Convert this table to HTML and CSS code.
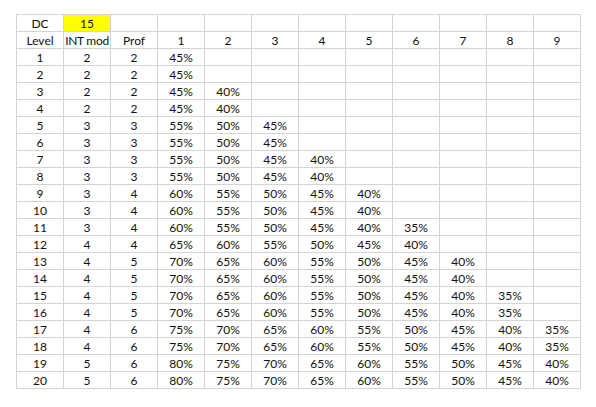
FILE: index.html
```html
<!DOCTYPE html>
<html>
<head>
<meta charset="utf-8">
<link rel="stylesheet" href="styles.css">
</head>
<body>
<div class="sheet">
<div class="c">DC</div><div class="c hl">15</div><div class="c"></div><div class="c"></div><div class="c"></div><div class="c"></div><div class="c"></div><div class="c"></div><div class="c"></div><div class="c"></div><div class="c"></div><div class="c"></div>
<div class="c">Level</div><div class="c tight">INT mod</div><div class="c">Prof</div><div class="c">1</div><div class="c">2</div><div class="c">3</div><div class="c">4</div><div class="c">5</div><div class="c">6</div><div class="c">7</div><div class="c">8</div><div class="c">9</div>
<div class="c">1</div><div class="c">2</div><div class="c">2</div><div class="c">45%</div><div class="c"></div><div class="c"></div><div class="c"></div><div class="c"></div><div class="c"></div><div class="c"></div><div class="c"></div><div class="c"></div>
<div class="c">2</div><div class="c">2</div><div class="c">2</div><div class="c">45%</div><div class="c"></div><div class="c"></div><div class="c"></div><div class="c"></div><div class="c"></div><div class="c"></div><div class="c"></div><div class="c"></div>
<div class="c">3</div><div class="c">2</div><div class="c">2</div><div class="c">45%</div><div class="c">40%</div><div class="c"></div><div class="c"></div><div class="c"></div><div class="c"></div><div class="c"></div><div class="c"></div><div class="c"></div>
<div class="c">4</div><div class="c">2</div><div class="c">2</div><div class="c">45%</div><div class="c">40%</div><div class="c"></div><div class="c"></div><div class="c"></div><div class="c"></div><div class="c"></div><div class="c"></div><div class="c"></div>
<div class="c">5</div><div class="c">3</div><div class="c">3</div><div class="c">55%</div><div class="c">50%</div><div class="c">45%</div><div class="c"></div><div class="c"></div><div class="c"></div><div class="c"></div><div class="c"></div><div class="c"></div>
<div class="c">6</div><div class="c">3</div><div class="c">3</div><div class="c">55%</div><div class="c">50%</div><div class="c">45%</div><div class="c"></div><div class="c"></div><div class="c"></div><div class="c"></div><div class="c"></div><div class="c"></div>
<div class="c">7</div><div class="c">3</div><div class="c">3</div><div class="c">55%</div><div class="c">50%</div><div class="c">45%</div><div class="c">40%</div><div class="c"></div><div class="c"></div><div class="c"></div><div class="c"></div><div class="c"></div>
<div class="c">8</div><div class="c">3</div><div class="c">3</div><div class="c">55%</div><div class="c">50%</div><div class="c">45%</div><div class="c">40%</div><div class="c"></div><div class="c"></div><div class="c"></div><div class="c"></div><div class="c"></div>
<div class="c">9</div><div class="c">3</div><div class="c">4</div><div class="c">60%</div><div class="c">55%</div><div class="c">50%</div><div class="c">45%</div><div class="c">40%</div><div class="c"></div><div class="c"></div><div class="c"></div><div class="c"></div>
<div class="c">10</div><div class="c">3</div><div class="c">4</div><div class="c">60%</div><div class="c">55%</div><div class="c">50%</div><div class="c">45%</div><div class="c">40%</div><div class="c"></div><div class="c"></div><div class="c"></div><div class="c"></div>
<div class="c">11</div><div class="c">3</div><div class="c">4</div><div class="c">60%</div><div class="c">55%</div><div class="c">50%</div><div class="c">45%</div><div class="c">40%</div><div class="c">35%</div><div class="c"></div><div class="c"></div><div class="c"></div>
<div class="c">12</div><div class="c">4</div><div class="c">4</div><div class="c">65%</div><div class="c">60%</div><div class="c">55%</div><div class="c">50%</div><div class="c">45%</div><div class="c">40%</div><div class="c"></div><div class="c"></div><div class="c"></div>
<div class="c">13</div><div class="c">4</div><div class="c">5</div><div class="c">70%</div><div class="c">65%</div><div class="c">60%</div><div class="c">55%</div><div class="c">50%</div><div class="c">45%</div><div class="c">40%</div><div class="c"></div><div class="c"></div>
<div class="c">14</div><div class="c">4</div><div class="c">5</div><div class="c">70%</div><div class="c">65%</div><div class="c">60%</div><div class="c">55%</div><div class="c">50%</div><div class="c">45%</div><div class="c">40%</div><div class="c"></div><div class="c"></div>
<div class="c">15</div><div class="c">4</div><div class="c">5</div><div class="c">70%</div><div class="c">65%</div><div class="c">60%</div><div class="c">55%</div><div class="c">50%</div><div class="c">45%</div><div class="c">40%</div><div class="c">35%</div><div class="c"></div>
<div class="c">16</div><div class="c">4</div><div class="c">5</div><div class="c">70%</div><div class="c">65%</div><div class="c">60%</div><div class="c">55%</div><div class="c">50%</div><div class="c">45%</div><div class="c">40%</div><div class="c">35%</div><div class="c"></div>
<div class="c">17</div><div class="c">4</div><div class="c">6</div><div class="c">75%</div><div class="c">70%</div><div class="c">65%</div><div class="c">60%</div><div class="c">55%</div><div class="c">50%</div><div class="c">45%</div><div class="c">40%</div><div class="c">35%</div>
<div class="c">18</div><div class="c">4</div><div class="c">6</div><div class="c">75%</div><div class="c">70%</div><div class="c">65%</div><div class="c">60%</div><div class="c">55%</div><div class="c">50%</div><div class="c">45%</div><div class="c">40%</div><div class="c">35%</div>
<div class="c">19</div><div class="c">5</div><div class="c">6</div><div class="c">80%</div><div class="c">75%</div><div class="c">70%</div><div class="c">65%</div><div class="c">60%</div><div class="c">55%</div><div class="c">50%</div><div class="c">45%</div><div class="c">40%</div>
<div class="c">20</div><div class="c">5</div><div class="c">6</div><div class="c">80%</div><div class="c">75%</div><div class="c">70%</div><div class="c">65%</div><div class="c">60%</div><div class="c">55%</div><div class="c">50%</div><div class="c">45%</div><div class="c">40%</div>
</div>
</body>
</html>
```
FILE: styles.css
```css
html, body {
  margin: 0;
  background: #fff;
}
body {
  padding: 14px 0 0 16px;
  font-family: Lato, "Liberation Sans", sans-serif;
  font-size: 12px;
  color: #111;
}
.sheet {
  display: inline-grid;
  grid-template-columns: repeat(12, 46px);
  grid-auto-rows: 16px;
  gap: 1px;
  padding: 1px;
  background: #d4d4d4;
}
.c {
  background: #fff;
  text-align: center;
  line-height: 17px;
  white-space: nowrap;
}
.tight {
  letter-spacing: -0.3px;
}
.hl {
  background: #ffff00;
}
```
